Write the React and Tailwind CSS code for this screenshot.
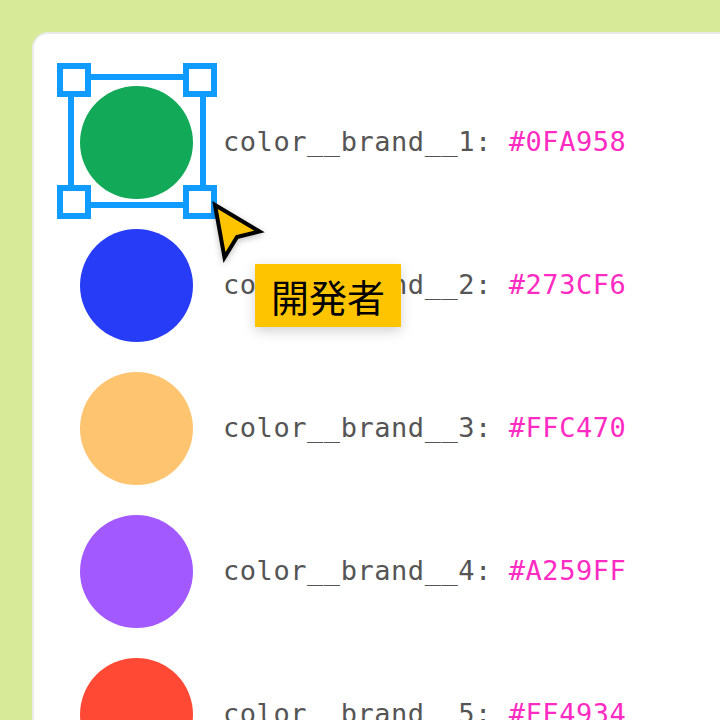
const colors = [
  { name: 'color__brand__1', hex: '#0FA958', dot: 'bg-[#12a958]', selected: true },
  { name: 'color__brand__2', hex: '#273CF6', dot: 'bg-[#273cf6]' },
  { name: 'color__brand__3', hex: '#FFC470', dot: 'bg-[#ffc470]' },
  { name: 'color__brand__4', hex: '#A259FF', dot: 'bg-[#a259ff]' },
  { name: 'color__brand__5', hex: '#FF4934', dot: 'bg-[#ff4934]' },
]

function Handle({ className }) {
  return <div className={`absolute h-[34px] w-[34px] border-[6px] border-[#0f9bff] bg-white ${className}`}></div>
}

function Selection() {
  return (
    <div className="absolute -left-3 -top-3 h-[134px] w-[138px] border-[6px] border-[#0f9bff]">
      <Handle className="-left-[17px] -top-[17px]" />
      <Handle className="-right-[17px] -top-[17px]" />
      <Handle className="-left-[17px] -bottom-[17px]" />
      <Handle className="-right-[17px] -bottom-[17px]" />
    </div>
  )
}

export default function App() {
  return (
    <div className="relative h-[720px] w-[720px] overflow-hidden bg-[#d7ea98] pl-8 pt-8">
      {/* Card */}
      <div className="h-[760px] w-[720px] rounded-tl-2xl border-2 border-[#e9ece6] bg-white pl-[46px] pt-[52px]">
        <div className="flex flex-col gap-[30px]">
          {colors.map((c) => (
            <div key={c.name} className="flex items-center gap-[30px]">
              <div className={`relative h-[113px] w-[113px] rounded-full ${c.dot}`}>
                {c.selected && <Selection />}
              </div>
              <p className="whitespace-pre font-['DejaVu_Sans_Mono',monospace] text-[27px] tracking-[0.55px] text-[#555555]">
                {c.name}: <span className="text-[#ff2bc2]">{c.hex}</span>
              </p>
            </div>
          ))}
        </div>
      </div>

      {/* Cursor */}
      <svg className="absolute left-[205px] top-[195px] drop-shadow-[0_2px_3px_rgba(0,0,0,0.25)]" width="70" height="80" viewBox="0 0 70 80">
        <path d="M10 10 L54.5 36.5 L32 42 L19.5 62.5 Z" fill="#ffc400" stroke="#000" strokeWidth="4" strokeMiterlimit="6" />
      </svg>

      {/* Tooltip */}
      <div className="absolute left-[255px] top-[264px] flex h-[63px] w-[146px] items-center justify-center bg-[#ffc400] font-['Noto_Sans_CJK_JP',sans-serif] text-[38px] text-black shadow-[0_4px_12px_rgba(0,0,0,0.18)]">
        開発者
      </div>
    </div>
  )
}
